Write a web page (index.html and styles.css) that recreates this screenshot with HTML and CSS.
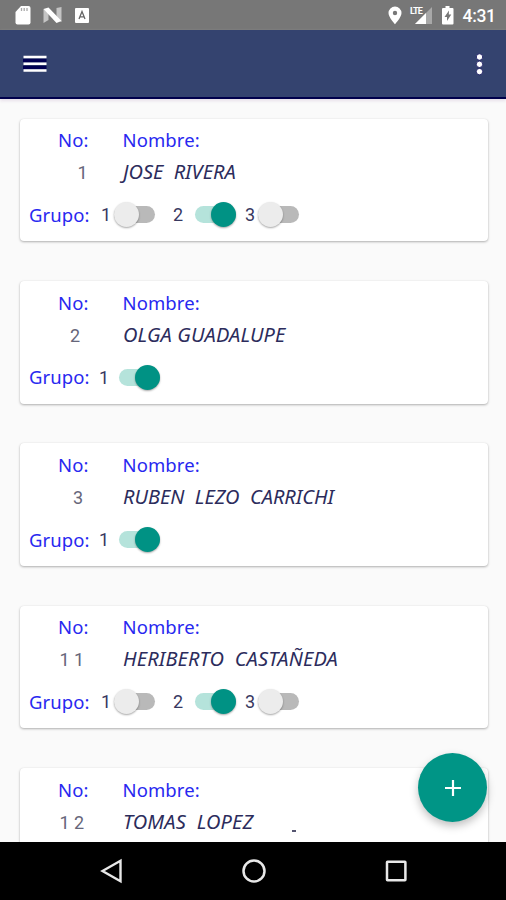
FILE: index.html
```html
<!DOCTYPE html>
<html lang="es">
<head>
<meta charset="utf-8">
<title>Grupos</title>
<link rel="stylesheet" href="styles.css">
</head>
<body>
<div class="screen">
  <header class="status">
    <svg class="status-icons" width="100" height="30" viewBox="0 0 100 30">
      <path fill="#fff" d="M21 6h7.500q2 0 2 2v14.500q0 2-2 2H17.500q-2 0-2-2V12z"/>
      <path stroke="#aaa" stroke-width="1.300" d="M21.500 8v3M24.200 8v3M27 8v3"/>
      <path fill="#c4c4c4" d="M43.500 9l5 4v7l-5 3zM56.500 8l5-1v15l-5-3z"/>
      <path fill="#fff" d="M43.500 9l5-1.500 13 13.500-5 2z"/>
      <rect x="75" y="8" width="14" height="15" rx="1" fill="#fff"/>
      <path d="M79 19l3-7.500 3 7.500M80.200 16.800h3.700" fill="none" stroke="#666" stroke-width="1.300"/>
    </svg>
    <div class="status-right">
      <svg width="72" height="30" viewBox="0 0 72 30">
        <path fill="#fff" fill-rule="evenodd" d="M10 6.500a6.500 6.500 0 0 1 6.500 6.500c0 4.200-6.500 11.300-6.500 11.300S3.500 17.200 3.500 13A6.500 6.500 0 0 1 10 6.500zm0 4.300a2.200 2.200 0 1 0 0 4.400 2.200 2.200 0 0 0 0-4.400z"/>
        <path fill="#a8a8a8" d="M47 7v17H30z"/>
        <path fill="#777" d="M24 7h14.500v8H30z"/>
        <text class="lte" x="25" y="14">LTE</text>
        <path fill="#fff" d="M41 13v11H30z"/>
        <path fill="#fff" d="M60.500 6h4v2h3q1 0 1 1v14.500q0 1-1 1H58q-1 0-1-1V9q0-1 1-1h2.500z"/>
        <path fill="#777" d="M64 10.500l-4.500 6.500h2.500v4l4.300-6.500h-2.500z"/>
      </svg>
      <span class="clock">4:31</span>
    </div>
  </header>
  <nav class="appbar">
    <svg width="30" height="30" viewBox="0 0 30 30">
      <path stroke="#000052" stroke-width="3.500" d="M3 11.500h23.500M3 18.500h23.500"/>
      <path stroke="#fff" stroke-width="2.600" d="M3.500 8h23M3.500 14.700h23M3.500 21.500h23"/>
    </svg>
    <svg width="14" height="30" viewBox="0 0 14 30">
      <g fill="#fff" stroke="#10105c" stroke-width=".8"><circle cx="7.500" cy="8" r="3.200"/><circle cx="7.500" cy="15.300" r="3.200"/><circle cx="7.500" cy="22.600" r="3.200"/></g>
    </svg>
  </nav>
  <main class="list">
    <article class="card">
      <div class="row"><span class="label no">No:</span><span class="label nombre">Nombre:</span></div>
      <div class="row"><span class="num n-1">1</span><span class="name name-1">JOSE&nbsp; RIVERA</span></div>
      <div class="row groups"><span class="label grupo">Grupo:</span>
        <span class="digit first">1</span><i class="switch"></i>
        <span class="digit second">2</span><i class="switch on"></i>
        <span class="digit third">3</span><i class="switch"></i></div>
    </article>
    <article class="card">
      <div class="row"><span class="label no">No:</span><span class="label nombre">Nombre:</span></div>
      <div class="row"><span class="num n-2">2</span><span class="name name-2">OLGA GUADALUPE</span></div>
      <div class="row groups"><span class="label grupo">Grupo:</span>
        <span class="digit single">1</span><i class="switch on"></i></div>
    </article>
    <article class="card">
      <div class="row"><span class="label no">No:</span><span class="label nombre">Nombre:</span></div>
      <div class="row"><span class="num n-3">3</span><span class="name name-3">RUBEN&nbsp; LEZO&nbsp; CARRICHI</span></div>
      <div class="row groups"><span class="label grupo">Grupo:</span>
        <span class="digit single">1</span><i class="switch on"></i></div>
    </article>
    <article class="card">
      <div class="row"><span class="label no">No:</span><span class="label nombre">Nombre:</span></div>
      <div class="row"><span class="num n-11">11</span><span class="name name-4">HERIBERTO&nbsp; CASTAÑEDA</span></div>
      <div class="row groups"><span class="label grupo">Grupo:</span>
        <span class="digit first">1</span><i class="switch"></i>
        <span class="digit second">2</span><i class="switch on"></i>
        <span class="digit third">3</span><i class="switch"></i></div>
    </article>
    <article class="card">
      <div class="row"><span class="label no">No:</span><span class="label nombre">Nombre:</span></div>
      <div class="row"><span class="num n-12">12</span><span class="name name-5">TOMAS&nbsp; LOPEZ</span><i class="speck"></i></div>
      <div class="row groups"></div>
    </article>
    <button class="fab" aria-label="Agregar">
      <svg width="18" height="18" viewBox="0 0 18 18"><path stroke="#fff" stroke-width="2.200" d="M9 1v16M1 9h16"/></svg>
    </button>
  </main>
  <footer class="navbar">
    <svg width="30" height="30" viewBox="0 0 30 30"><path fill="none" stroke="#e8e8e8" stroke-width="2.400" d="M6.500 15L24.500 4.800v20.400z"/></svg>
    <svg width="30" height="30" viewBox="0 0 30 30"><circle cx="15" cy="15" r="10.500" fill="none" stroke="#e8e8e8" stroke-width="2.500"/></svg>
    <svg width="30" height="30" viewBox="0 0 30 30"><rect x="6" y="5.800" width="18.400" height="18.400" rx=".5" fill="none" stroke="#e8e8e8" stroke-width="2.500"/></svg>
  </footer>
</div>
</body>
</html>
```
FILE: styles.css
```css
* { box-sizing: border-box; }
body { margin: 0; }
.screen {
  width: 506px; height: 900px; overflow: hidden;
  display: flex; flex-direction: column;
  background: #fafafa; font-family: "Noto Sans", sans-serif;
}
.status {
  height: 30px; flex: none; background: #777;
  display: flex; justify-content: space-between;
}
.status svg { display: block; }
.status-right { display: flex; width: 121px; }
.lte { font: 700 9px Roboto, sans-serif; letter-spacing: -.8px; fill: #fff; }
.clock { font: 500 17.500px/32px Roboto, sans-serif; color: #fff; margin-left: 5.500px; letter-spacing: -.3px; }
.appbar {
  height: 69px; flex: none; background: #34436f;
  border-bottom: 2px solid #00004c;
  box-shadow: 0 2px 3px #e8e0ea;
  display: flex; align-items: center; justify-content: space-between;
  padding: 0 20px; z-index: 1;
}
.list {
  flex: 1; min-height: 0; overflow: hidden; position: relative;
  padding: 19.600px 18.500px 0 20px;
  display: flex; flex-direction: column; gap: 39.800px;
}
.card {
  height: 122.600px; flex: none; background: #fff; border-radius: 4px;
  padding-top: 5.700px; box-shadow: 0 1px 2.500px rgba(0,0,0,.3), 0 0 1px rgba(0,0,0,.08);
}
.row { height: 32px; display: flex; align-items: center; white-space: nowrap; }
.row.groups { height: 53px; }
.label { color: #2828f0; font-size: 18.500px; line-height: 32px; letter-spacing: .1px; }
.no { width: 64.500px; margin-left: 38px; }
.grupo { width: 72px; margin-left: 9px; }
.num { font: 18px/32px Roboto, sans-serif; color: #66667a; padding-top: 2px; width: 103px; }
.n-1 { padding-left: 57.500px; }
.n-2 { padding-left: 50px; }
.n-3 { padding-left: 53px; }
.n-11, .n-12 { padding-left: 39.500px; letter-spacing: 4.500px; }
.name { font-size: 20px; line-height: 32px; font-style: italic; color: #2c2c5c; }
.name-2, .name-4, .name-5 { letter-spacing: .15px; }
.digit { font: 18px/32px Roboto, sans-serif; color: #38385f; padding-top: 1px; }
.first { width: 13px; }
.single { width: 20px; margin-left: -2px; }
.second { width: 22px; margin-left: 18px; }
.third { width: 13px; margin-left: 9px; }
.switch {
  width: 41px; height: 17px; flex: none; border-radius: 9px;
  background: #b9b9b9; display: flex; align-items: center;
}
.switch::before {
  content: ""; width: 25px; height: 25px; flex: none; border-radius: 50%;
  background: #ececec; box-shadow: 0 1px 2px rgba(0,0,0,.35);
}
.switch.on { background: #b5e3db; justify-content: flex-end; }
.switch.on::before { background: #009284; }
.speck { width: 4px; height: 1.500px; background: #555570; margin: 18px 0 0 39px; }
.fab {
  position: absolute; right: 19px; bottom: 20px;
  width: 69px; height: 69px; border: 0; border-radius: 50%; padding: 0;
  background: #009586; box-shadow: 0 4px 9px rgba(0,0,0,.25);
  display: flex; align-items: center; justify-content: center;
}
.navbar {
  height: 58px; flex: none; background: #000;
  display: flex; justify-content: space-between; align-items: center;
  padding: 0 95px 0 96px;
}
```
